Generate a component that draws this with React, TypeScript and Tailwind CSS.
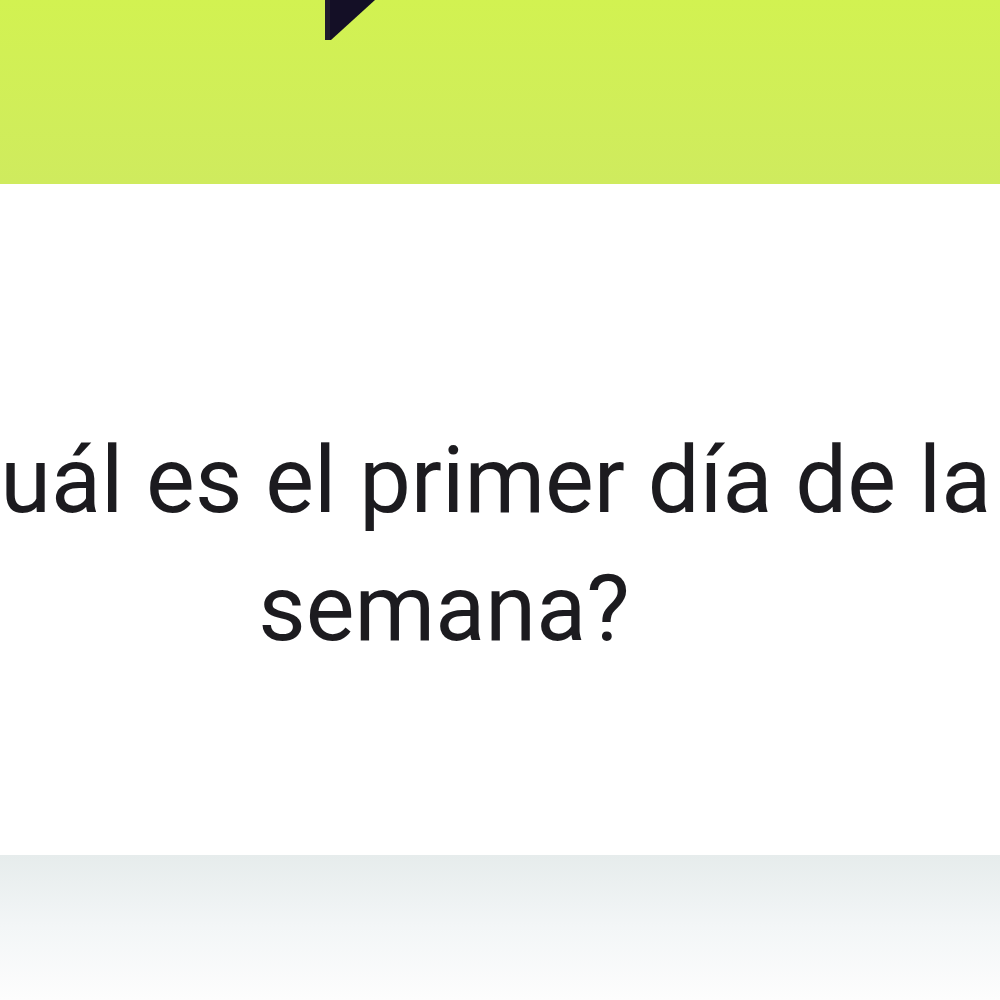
export default function App() {
  return (
    <div className="flex h-[1000px] w-[1000px] flex-col overflow-hidden bg-white" style={{ fontFamily: 'Roboto, "Noto Sans", sans-serif' }}>
      <header className="relative h-[184px] w-full shrink-0 bg-gradient-to-b from-[#d2f251] to-[#cfeb5e]">
        <svg className="absolute left-[325px] top-0" width="52" height="42" viewBox="0 0 52 42">
          <polygon points="0,0 50,0 6,40 0,40" fill="#140f26" />
          <rect x="0" y="0" width="5" height="40" fill="#1f1c2c" />
        </svg>
      </header>
      <main className="h-[671px] w-full shrink-0 pt-[233px]">
        <div className="ml-[-112px] w-[1112px] text-center text-[92px] leading-[128px] text-[#1c1b1f]">
          <p className="whitespace-nowrap">¿Cuál es el primer día de la</p>
          <p className="whitespace-nowrap">semana?</p>
        </div>
      </main>
      <footer className="h-[145px] w-full shrink-0 bg-gradient-to-b from-[#e6ecec] via-[#f3f6f7] to-[#fdfdfd]" />
    </div>
  );
}
